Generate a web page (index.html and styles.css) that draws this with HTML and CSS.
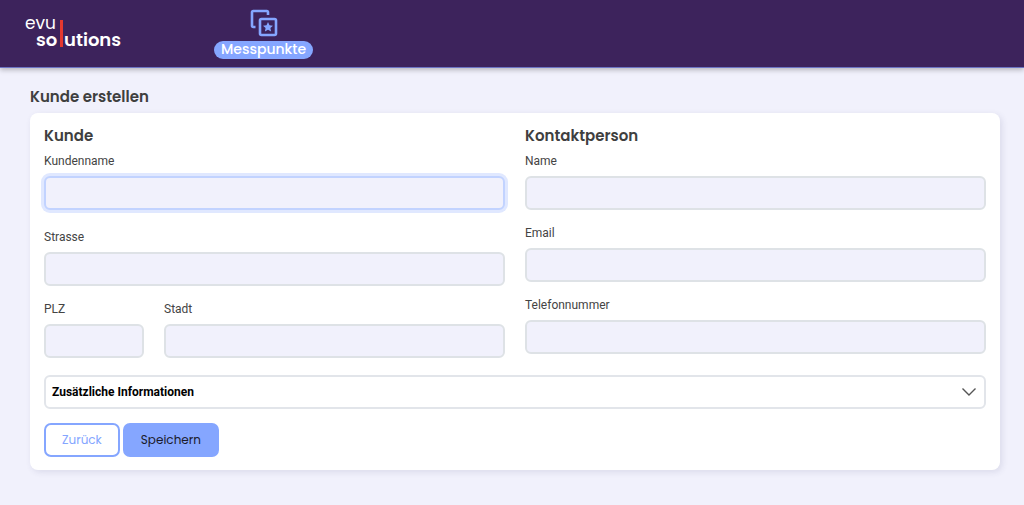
FILE: index.html
```html
<!DOCTYPE html>
<html lang="de">

<head>
    <meta charset="UTF-8">
    <meta name="viewport" content="width=device-width, initial-scale=1.0">
    <title>Kunde erstellen</title>
    <link rel="stylesheet" href="styles.css">
</head>

<body>

    <header class="topbar">
        <a href="#" class="logo" aria-label="evu solutions">
            <svg width="104" height="60" viewBox="0 0 104 60">
                <text class="logo-light" x="0" y="25">evu</text>
                <text class="logo-bold" x="11" y="42">so</text>
                <rect x="35" y="16" width="3" height="27" fill="#e5392f"/>
                <text class="logo-bold" x="39" y="42">utions</text>
            </svg>
        </a>
        <nav>
            <a href="#" class="nav-item">
                <svg width="28" height="28" viewBox="0 0 28 28" fill="none" stroke="#85a6ff" stroke-width="2.600" stroke-linejoin="round">
                    <path d="M5.500 18H3.200Q2 18 2 16.800V3.200Q2 2 3.200 2H16.800Q18 2 18 3.200V6"/>
                    <rect x="10" y="10" width="16" height="16" rx="1.500"/>
                    <path d="M18 13l1.500 3.300 3.500.400-2.600 2.400.700 3.500-3.100-1.800-3.100 1.800.700-3.500-2.600-2.400 3.500-.400z" fill="#85a6ff" stroke="none"/>
                </svg>
                <span class="nav-label">Messpunkte</span>
            </a>
        </nav>
    </header>

    <main class="content">
        <h1>Kunde erstellen</h1>

        <form class="card">
            <div class="columns">
                <section>
                    <h2>Kunde</h2>
                    <div class="field field-main">
                        <label for="kundenname">Kundenname</label>
                        <input type="text" id="kundenname" class="active">
                    </div>
                    <div class="field">
                        <label for="strasse">Strasse</label>
                        <input type="text" id="strasse">
                    </div>
                    <div class="city-row">
                        <div class="field">
                            <label for="plz">PLZ</label>
                            <input type="text" id="plz">
                        </div>
                        <div class="field">
                            <label for="stadt">Stadt</label>
                            <input type="text" id="stadt">
                        </div>
                    </div>
                </section>

                <section>
                    <h2>Kontaktperson</h2>
                    <div class="field">
                        <label for="name">Name</label>
                        <input type="text" id="name">
                    </div>
                    <div class="field">
                        <label for="email">Email</label>
                        <input type="email" id="email">
                    </div>
                    <div class="field">
                        <label for="telefon">Telefonnummer</label>
                        <input type="tel" id="telefon">
                    </div>
                </section>
            </div>

            <button type="button" class="accordion" aria-expanded="false">
                Zusätzliche Informationen
                <svg width="16" height="10" viewBox="0 0 16 10" fill="none" stroke="#555" stroke-width="1.400">
                    <path d="M1.500 1.500L8 8l6.500-6.500"/>
                </svg>
            </button>

            <div class="actions">
                <button type="button" class="btn btn-outline">Zurück</button>
                <button type="submit" class="btn btn-primary">Speichern</button>
            </div>
        </form>
    </main>

</body>

</html>
```
FILE: styles.css
```css
* {
    margin: 0;
    padding: 0;
    box-sizing: border-box;
}

body {
    font-family: Roboto, sans-serif;
    font-size: 12px;
    line-height: 18px;
    background-color: #f1f1fc;
    color: #444444;
}

a {
    text-decoration: none;
}

svg {
    display: block;
}

.topbar {
    display: flex;
    align-items: center;
    gap: 85px;
    height: 68px;
    padding: 0 25px;
    background-color: #3d235c;
    border-bottom: 1px solid #6c74c4;
    box-shadow: 0 2px 5px rgba(0, 0, 0, 0.25);
}

.logo-light,
.logo-bold {
    font-family: Poppins, sans-serif;
    fill: #ffffff;
}

.logo-light {
    font-size: 17px;
}

.logo-bold {
    font-size: 18px;
    font-weight: 600;
}

.nav-item {
    display: flex;
    flex-direction: column;
    align-items: center;
    gap: 4px;
}

.nav-label {
    padding: 0 7px 2px;
    border-radius: 9px;
    background-color: #85a6ff;
    color: #ffffff;
    font-family: Poppins, sans-serif;
    font-size: 14px;
    font-weight: 500;
    line-height: 16px;
}

.content {
    padding: 17px 24px 34px 30px;
}

h1,
h2 {
    font-family: Poppins, sans-serif;
    font-size: 15px;
    font-weight: 600;
    line-height: 24px;
    color: #3f3f3f;
}

h1 {
    margin-bottom: 4px;
}

h2 {
    margin-bottom: 4px;
}

.card {
    padding: 11px 14px 13px;
    background-color: #ffffff;
    border-radius: 8px;
    box-shadow: 2px 2px 6px rgba(60, 60, 110, 0.12);
}

.columns {
    display: grid;
    grid-template-columns: 1fr 1fr;
    gap: 20px;
}

.field {
    margin-bottom: 14px;
}

.field-main {
    margin-bottom: 18px;
}

.field label {
    display: block;
    margin-bottom: 6px;
}

.field input {
    display: block;
    width: 100%;
    height: 34px;
    padding: 0 8px;
    border: 2px solid #dee2e6;
    border-radius: 6px;
    background-color: #f1f1fc;
    font: inherit;
    outline: none;
}

.field input:focus,
.field input.active {
    border-color: #c2d3ff;
    box-shadow: 0 0 0 3px #e0e8ff;
}

.city-row {
    display: grid;
    grid-template-columns: 100px 1fr;
    gap: 20px;
}

.accordion {
    display: flex;
    align-items: center;
    justify-content: space-between;
    width: 100%;
    height: 34px;
    margin-top: 3px;
    padding: 0 7px 0 6px;
    border: 2px solid #e2e5ea;
    border-radius: 6px;
    background-color: #ffffff;
    color: #000000;
    font-family: inherit;
    font-size: 12px;
    font-weight: 700;
}

.actions {
    display: flex;
    gap: 3px;
    margin-top: 14px;
}

.btn {
    height: 34px;
    padding: 0 16px;
    border: 2px solid #85a6ff;
    border-radius: 7px;
    font-family: Poppins, sans-serif;
    font-size: 12px;
}

.btn-outline {
    background-color: #ffffff;
    color: #85a6ff;
}

.btn-primary {
    background-color: #85a6ff;
    color: #1b1b2b;
}
```
